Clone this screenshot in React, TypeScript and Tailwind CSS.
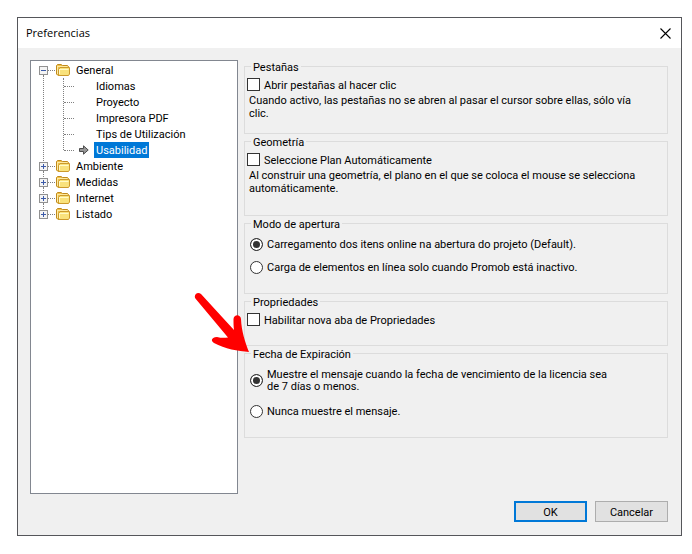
import React, { useState } from 'react';
import { clsx } from 'clsx';

interface TreeItem {
    id: string;
    label: string;
    children?: string[];
}

const treeItems: TreeItem[] = [
    {
        id: 'general',
        label: 'General',
        children: ['Idiomas', 'Proyecto', 'Impresora PDF', 'Tips de Utilización', 'Usabilidad']
    },
    { id: 'ambiente', label: 'Ambiente' },
    { id: 'medidas', label: 'Medidas' },
    { id: 'internet', label: 'Internet' },
    { id: 'listado', label: 'Listado' }
];

const FolderIcon = () => (
    <svg className="w-[14px] h-3 shrink-0" viewBox="0 0 14 12">
        <path d="M.5 10V1.5L1.5 .5H5L6.5 1.5H11.5L12.5 2.5V10.5L11.5 11.5H2Z" fill="#f0c04a" stroke="#c08a1c" />
        <path d="M1.5 2V10M1.5 2.5H11.5" stroke="#fdeaa0" />
        <path d="M2.5 11V5.5L4 3.5H13.5V10L12.5 11.5H2.5Z" fill="#f9e27c" stroke="#cc9a2c" />
        <path d="M3.5 5.5H12.5M3.5 5V10" stroke="#fffac8" />
    </svg>
);

const ExpandBox = ({ open }: { open?: boolean }) => (
    <svg className="w-[9px] h-[9px] shrink-0" viewBox="0 0 9 9">
        <rect x=".5" y=".5" width="8" height="8" fill="#f4f4f4" stroke="#919191" />
        <path d={open ? 'M2 4.5H7' : 'M2 4.5H7M4.5 2V7'} stroke="#3b5aa8" />
    </svg>
);

const SelectedArrow = () => (
    <svg className="w-[10px] h-[10px] shrink-0" viewBox="0 0 10 10">
        <path d="M.5 3.5H4.5V.8L9.2 5L4.5 9.2V6.5H.5Z" fill="#969696" stroke="#4d4d4d" />
    </svg>
);

// Red hand-drawn pointer lying over the dialog
const Pointer = () => (
    <svg className="absolute left-[174px] top-[274px] w-[60px] h-[62px] pointer-events-none" viewBox="0 0 60 62">
        <path
            d="M3.4 6.5C1.2 3 5.5 -1 9 2L42 38C41.5 34 41.5 31 41.5 27C42 22 48.5 22 49 27C49.5 39 53 50 57 60C46 59 33 57 22 51C18 48.5 20 45 25 45C29 46 32 46 36 45.5Z"
            fill="#ff0000"
        />
    </svg>
);

const Group = ({ title, className, children }: { title: string; className: string; children: React.ReactNode }) => (
    <fieldset className={clsx('border border-[#dcdcdc] min-w-0', className)}>
        <legend className="ml-[6px] px-[2px] h-[13px] leading-[15px]">{title}</legend>
        {children}
    </fieldset>
);

const Check = ({ label }: { label: string }) => (
    <label className="flex items-center gap-1 ml-[2px] mt-1 h-[15px]">
        <input type="checkbox" className="appearance-none w-[13px] h-[13px] border border-[#333333] bg-white checked:bg-[#333333]" />
        <span className="pt-[2px] leading-[13px]">{label}</span>
    </label>
);

interface RadioProps {
    name: string;
    label: string;
    checked: boolean;
    onChange: () => void;
}

const Radio = ({ name, label, checked, onChange }: RadioProps) => (
    <label className="flex items-center gap-1 ml-[5px] min-h-[13px] leading-[12px]">
        <input
            type="radio"
            name={name}
            checked={checked}
            onChange={onChange}
            className="appearance-none shrink-0 w-[13px] h-[13px] rounded-full border border-[#333333] bg-white checked:bg-[#333333] checked:shadow-[inset_0_0_0_2px_white]"
        />
        <span className="pt-[1px]">{label}</span>
    </label>
);

export default function App() {
    const [selected, setSelected] = useState('Usabilidad');
    const [openMode, setOpenMode] = useState(0);
    const [expiry, setExpiry] = useState(0);

    return (
        <div className="min-h-screen bg-white p-[17px] pr-[10px] pb-[18px] font-['Roboto',sans-serif] text-[11px] text-black">
            <div className="relative border border-[#55565a] bg-[#f0f0f0]">
                <header className="flex items-center justify-between h-[30px] bg-white pl-2 pr-[10px]">
                    <h1 className="font-['Open_Sans',sans-serif]">Preferencias</h1>
                    <button aria-label="Cerrar">
                        <svg className="w-[11px] h-[11px]" viewBox="0 0 11 11">
                            <path d="M.5 .5L10.5 10.5M10.5 .5L.5 10.5" stroke="#000" strokeWidth="1.1" />
                        </svg>
                    </button>
                </header>

                <main className="flex gap-[6px] pt-3 pl-3 pr-[13px]">
                    <nav className="w-[208px] shrink-0 h-[434px] border border-[#828790] bg-white pt-[1px] pl-2">
                        {treeItems.map((item, index) => (
                            <div key={item.id} className={clsx('relative', index < treeItems.length - 1 && 'before:absolute before:left-[4px] before:top-[13px] before:bottom-[-3px] before:border-l before:border-dotted before:border-[#808080]')}>
                                <div className="flex items-center h-4">
                                    <ExpandBox open={!!item.children} />
                                    <span className="w-[7px] mr-[1px] border-t border-dotted border-[#808080]" />
                                    <FolderIcon />
                                    <span className="ml-[6px] pt-[2px] leading-[14px]">{item.label}</span>
                                </div>
                                {item.children && (
                                    <ul className="relative before:absolute before:left-[24px] before:top-0 before:h-[72px] before:border-l before:border-dotted before:border-[#808080]">
                                        {item.children.map(child => (
                                            <li key={child} className="flex items-center h-4 pl-[25px]">
                                                <span className="w-[10px] border-t border-dotted border-[#808080]" />
                                                <span className="w-5 pl-[5px]">{selected === child && <SelectedArrow />}</span>
                                                <button
                                                    onClick={() => setSelected(child)}
                                                    className={clsx('px-[2px] pt-[2px] leading-[14px]', selected === child && 'bg-[#0078d7] text-white')}
                                                >
                                                    {child}
                                                </button>
                                            </li>
                                        ))}
                                    </ul>
                                )}
                            </div>
                        ))}
                    </nav>

                    <section className="flex-1 min-w-0 flex flex-col gap-[1px]">
                        <Group title="Pestañas" className="h-[74px]">
                            <Check label="Abrir pestañas al hacer clic" />
                            <p className="ml-1 mt-[2px] leading-[13px]">
                                Cuando activo, las pestañas no se abren al pasar el cursor sobre ellas, sólo vía
                                <br />
                                clic.
                            </p>
                        </Group>
                        <Group title="Geometría" className="h-[81px]">
                            <Check label="Seleccione Plan Automáticamente" />
                            <p className="ml-1 mt-[2px] leading-[13px]">
                                Al construir una geometría, el plano en el que se coloca el mouse se selecciona
                                <br />
                                automáticamente.
                            </p>
                        </Group>
                        <Group title="Modo de apertura" className="h-[77px]">
                            <div className="flex flex-col gap-[10px] pt-2">
                                <Radio name="apertura" label="Carregamento dos itens online na abertura do projeto (Default)." checked={openMode === 0} onChange={() => setOpenMode(0)} />
                                <Radio name="apertura" label="Carga de elementos en línea solo cuando Promob está inactivo." checked={openMode === 1} onChange={() => setOpenMode(1)} />
                            </div>
                        </Group>
                        <Group title="Propriedades" className="h-[51px]">
                            <Check label="Habilitar nova aba de Propriedades" />
                        </Group>
                        <Group title="Fecha de Expiración" className="h-[91px]">
                            <div className="flex flex-col gap-3 pt-2 max-w-[372px]">
                                <Radio name="expiracion" label="Muestre el mensaje cuando la fecha de vencimiento de la licencia sea de 7 días o menos." checked={expiry === 0} onChange={() => setExpiry(0)} />
                                <Radio name="expiracion" label="Nunca muestre el mensaje." checked={expiry === 1} onChange={() => setExpiry(1)} />
                            </div>
                        </Group>
                    </section>
                </main>

                <footer className="flex justify-end gap-2 pt-[7px] pr-[13px] pb-[13px]">
                    <button className="w-[73px] h-[21px] pt-[2px] leading-[14px] border-2 border-[#0078d7] bg-[#e1e1e1]">OK</button>
                    <button className="w-[73px] h-[21px] pt-[2px] leading-[14px] border border-[#adadad] bg-[#e1e1e1]">Cancelar</button>
                </footer>

                <Pointer />
            </div>
        </div>
    );
}
